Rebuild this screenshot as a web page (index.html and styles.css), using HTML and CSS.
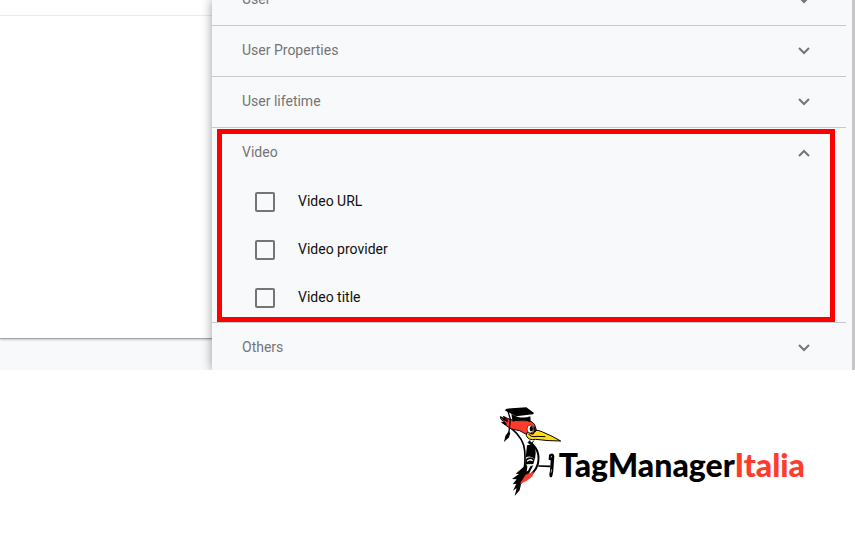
FILE: index.html
```
<!DOCTYPE html>
<html lang="en">
<head>
    <meta charset="UTF-8">
    <meta name="viewport" content="width=device-width, initial-scale=1.0">
    <title>Tag Manager Italia</title>
    <link rel="stylesheet" href="styles.css">
</head>
<body>
    <main class="workspace">
        <div class="background">
            <div class="card">
                <div class="card-header"></div>
            </div>
        </div>
        <section class="panel">
            <div class="groups">
                <div class="group">
                    <button class="group-header">
                        <span class="text">User</span>
                        <svg class="chevron" viewBox="0 0 12 8"><path d="M1 1l5 5 5-5"/></svg>
                    </button>
                </div>
                <div class="group">
                    <button class="group-header">
                        <span class="text">User Properties</span>
                        <svg class="chevron" viewBox="0 0 12 8"><path d="M1 1l5 5 5-5"/></svg>
                    </button>
                </div>
                <div class="group">
                    <button class="group-header">
                        <span class="text">User lifetime</span>
                        <svg class="chevron" viewBox="0 0 12 8"><path d="M1 1l5 5 5-5"/></svg>
                    </button>
                </div>
                <div class="group highlighted">
                    <button class="group-header" aria-expanded="true">
                        <span class="text">Video</span>
                        <svg class="chevron" viewBox="0 0 12 8"><path d="M1 7l5-5 5 5"/></svg>
                    </button>
                    <label class="option"><input type="checkbox"><span class="text">Video URL</span></label>
                    <label class="option"><input type="checkbox"><span class="text">Video provider</span></label>
                    <label class="option"><input type="checkbox"><span class="text">Video title</span></label>
                </div>
                <div class="group">
                    <button class="group-header">
                        <span class="text">Others</span>
                        <svg class="chevron" viewBox="0 0 12 8"><path d="M1 1l5 5 5-5"/></svg>
                    </button>
                </div>
            </div>
        </section>
    </main>
    <footer class="footer">
        <svg class="bird" viewBox="24 12 180 276">
            <!-- neck and body -->
            <path d="M62 84C82 98 98 120 101 150C104 170 103 190 100 208L124 226L138 206C146 182 146 156 132 136L118 122L92 96Z" fill="#fff"/>
            <path d="M62 86C86 106 99 126 101 152C103 176 102 194 99 208" fill="none" stroke="#000" stroke-width="5"/>
            <path d="M114 125C140 142 147 166 140 194C134 212 120 226 104 238" fill="none" stroke="#000" stroke-width="6"/>
            <!-- wing -->
            <path d="M108 136L124 133Q134 143 134 160L132 178Q118 164 104 173Z" fill="#000"/>
            <path d="M104 178Q117 166 131 178L127 192L103 195Z" fill="#000"/>
            <path d="M108 184Q117 176 125 182M106 195L121 195" fill="none" stroke="#fff" stroke-width="4"/>
            <!-- tail -->
            <path d="M104 190L101 198L74 221L84 222L63 237L77 238L65 253L76 251L66 272L77 264L71 288L86 271L90 253L114 221L127 196L118 199L112 211L107 215L109 200Z" fill="#000"/>
            <path d="M130 216Q115 220 104 224L86 252Q111 243 124 229Z" fill="#ff3b2d"/>
            <!-- arm -->
            <path d="M142 198L178 199" fill="none" stroke="#000" stroke-width="5"/>
            <path d="M174 164Q188 155 190 168L187 210Q185 234 179 232Q172 230 177 212L179 181L173 179Z" fill="#000"/>
            <path d="M182 168L180 173M182 208L180 218" fill="none" stroke="#fff" stroke-width="2"/>
            <!-- head -->
            <path d="M28 50L42 57L37 49L49 55Q65 63 100 62Q122 60 131 74L138 96L108 104Q86 88 61 87L46 77L32 67L42 67L30 58Z" fill="#ff3b2d" stroke="#000" stroke-width="3"/>
            <path d="M28 49L45 59L38 49L51 60L46 76L31 67L42 66Z" fill="#000"/>
            <path d="M39 60L49 67L46 72Z" fill="#ff3b2d"/>
            <!-- beak -->
            <path d="M133 91Q143 90 155 96Q184 108 209 123Q170 123 134 118Q112 122 106 107Q104 96 113 97Q119 104 127 102Z" fill="#ffdc16" stroke="#000" stroke-width="3" stroke-linejoin="round"/>
            <path d="M112 101Q119 113 138 109L163 110M117 121L111 128L121 134L128 122" fill="none" stroke="#000" stroke-width="3"/>
            <!-- eye -->
            <ellipse cx="118" cy="87" rx="10" ry="12" fill="#fff" stroke="#000" stroke-width="2"/>
            <ellipse cx="121" cy="86" rx="5" ry="8" fill="#000"/>
            <path d="M130 81L133 96" stroke="#000" stroke-width="4"/>
            <!-- graduation cap -->
            <path d="M61 42L78 50Q100 56 118 49L119 66Q92 55 65 65Z" fill="#000"/>
            <path d="M41 31L47 26L106 22L129 39L126 43L75 49Z" fill="#000"/>
            <path d="M51 34L58 57L54 96" fill="none" stroke="#000" stroke-width="4"/>
            <path d="M53 94L58 99L54 112L39 126L43 108Z" fill="#000"/>
        </svg>
        <p class="brand">TagManager<span class="brand-accent">Italia</span></p>
    </footer>
</body>
</html>
```
FILE: styles.css
```
body {
    margin: 0;
    background: #fff;
    font-family: Roboto, Arial, sans-serif;
    font-size: 14px;
}

.workspace {
    display: flex;
    height: 370px;
    overflow: hidden;
    background: #f8f9fb;
}

.background {
    flex: 0 0 212px;
}

.card {
    height: 338px;
    background: #fff;
    border-bottom: 1px solid #a5a5a8;
    box-shadow: 0 1px 2px rgba(0, 0, 0, 0.2);
}

.card-header {
    height: 15px;
    border-bottom: 1px solid #ebebeb;
}

.panel {
    flex: 1;
    padding-right: 6px;
    background: #f8f9fb;
    border-right: 3px solid #c6c6c8;
    box-shadow: 0 0 10px rgba(0, 0, 0, 0.4);
}

/* list is scrolled halfway through the first group */
.groups {
    margin-top: -25px;
}

.group {
    border-bottom: 1px solid #c7c9cc;
}

.group-header {
    display: flex;
    align-items: center;
    justify-content: space-between;
    width: 100%;
    height: 50px;
    padding: 0 36px 0 30px;
    border: none;
    background: none;
    color: #757575;
    font: inherit;
    cursor: pointer;
}

.text {
    padding-bottom: 2px;
}

.chevron {
    width: 12px;
    height: 8px;
    fill: none;
    stroke: #757575;
    stroke-width: 2;
}

.highlighted {
    position: relative;
}

.highlighted::after {
    content: "";
    position: absolute;
    inset: 1px 11px 0 5px;
    border: 5px solid #f00;
    pointer-events: none;
}

.option {
    display: flex;
    align-items: center;
    gap: 23px;
    height: 48px;
    padding-left: 43px;
    color: #111;
}

.option input {
    appearance: none;
    box-sizing: border-box;
    width: 20px;
    height: 20px;
    margin: 0;
    border: 2px solid #757575;
    border-radius: 2px;
}

.footer {
    display: flex;
    justify-content: flex-end;
    padding: 34px 50px 0 0;
}

.bird {
    width: 60px;
    height: 92px;
    overflow: visible;
}

.brand {
    margin: 41px 0 0;
    font-family: Lato, sans-serif;
    font-size: 32px;
    font-weight: 900;
    line-height: 40px;
}

.brand-accent {
    color: #ff3b2d;
}
```
